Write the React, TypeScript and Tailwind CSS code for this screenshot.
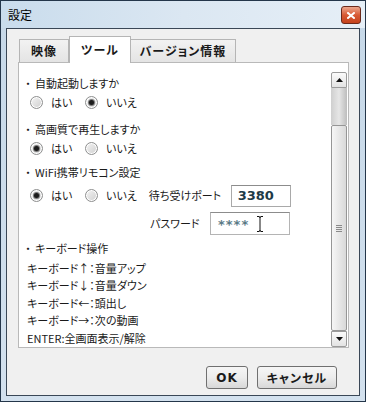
import React from "react";

const jp = { fontFamily: '"Noto Sans CJK JP", "Liberation Sans", sans-serif', fontFeatureSettings: '"palt"' };

const Radio = ({ checked }: { checked?: boolean }) => (
  <span className="flex h-[13px] w-[13px] items-center justify-center rounded-full border border-[#8e8f8f] bg-linear-to-br from-[#f4f4f4] to-[#cfcfcf] shadow-[inset_0_0_0_1px_#ffffff]">
    {checked && <span className="h-[5px] w-[5px] rounded-full bg-[#1c1c1c] ring-1 ring-[#7a7a7a]" />}
  </span>
);

const RadioPair = ({ yes }: { yes: boolean }) => (
  <div className="flex items-center">
    <div className="flex w-[55px] items-center gap-[8px]">
      <Radio checked={yes} />
      <span>はい</span>
    </div>
    <div className="flex items-center gap-[8px]">
      <Radio checked={!yes} />
      <span>いいえ</span>
    </div>
  </div>
);

const Heading = ({ children, className }: { children: React.ReactNode; className?: string }) => (
  <div className={"flex h-[16px] items-center " + (className ?? "")}>
    <span className="flex w-[12px] justify-center">・</span>
    <span className="ml-[1px]">{children}</span>
  </div>
);

const Arrow = ({ up }: { up?: boolean }) => (
  <svg width="7" height="4" viewBox="0 0 7 4">
    {up ? <polygon points="0,4 7,4 3.5,0" fill="#111" /> : <polygon points="0,0 7,0 3.5,4" fill="#111" />}
  </svg>
);

export default function App() {
  return (
    <div className="flex h-[402px] w-[366px] flex-col border border-[#24364a] bg-linear-to-b from-[#c6d8e8] to-[#d3e1ee] text-[#1a1a1a]" style={jp}>
      {/* title bar */}
      <div className="flex h-[27px] items-center justify-between bg-linear-to-r from-[#c9dcec] via-[#dbe7f2] to-[#e6eff7] pl-[7px] pr-[4px]">
        <span className="text-[12px] leading-none text-black">設定</span>
        <div className="mt-[1px] flex h-[18px] w-[20px] items-center justify-center rounded-[3px] border border-[#6b2a1c] bg-linear-to-b from-[#eba68c] via-[#d85a34] to-[#c4421c]">
          <svg width="8" height="7" viewBox="0 0 8 7">
            <path d="M1 1 L7 6 M7 1 L1 6" stroke="#fff" strokeWidth="2" strokeLinecap="square" />
          </svg>
        </div>
      </div>

      {/* client */}
      <div className="mx-[5px] flex h-[368px] flex-col border border-[#3a4756] bg-[#f0f0f0]">
        {/* tabs */}
        <div className="ml-[11px] mt-[7px] flex h-[26px] items-end pl-[1px] text-[12px] font-bold tracking-[1px]">
          <div className="flex h-[23px] w-[50px] items-center justify-center border border-b-0 border-[#b5b5b5] bg-linear-to-b from-[#f2f2f2] to-[#e4e4e4]">映像</div>
          <div className="relative z-10 -mb-px flex h-[27px] w-[62px] items-center justify-center border border-b-0 border-[#b5b5b5] bg-white pb-[1px]">ツール</div>
          <div className="flex h-[23px] w-[105px] items-center justify-center border border-b-0 border-l-0 border-[#b5b5b5] bg-linear-to-b from-[#f2f2f2] to-[#e4e4e4]">バージョン情報</div>
        </div>

        {/* panel */}
        <div className="ml-[11px] flex h-[286px] w-[331px] border border-[#b9b9b9] bg-white">
          <div className="flex flex-1 flex-col pl-[3px] pt-[13px] text-[11px] leading-none">
            <Heading>自動起動しますか</Heading>
            <div className="ml-[8px] mt-[1px] flex h-[20px] items-center">
              <RadioPair yes={false} />
            </div>
            <Heading className="mt-[9px]">高画質で再生しますか</Heading>
            <div className="ml-[8px] mt-[1px] flex h-[20px] items-center">
              <RadioPair yes={true} />
            </div>
            <Heading className="mt-[7px]">WiFi携帯リモコン設定</Heading>
            <div className="ml-[8px] mt-[4px] flex h-[22px] items-center">
              <RadioPair yes={true} />
              <span className="ml-[12px] w-[82px]">待ち受けポート</span>
              <div className="flex h-[22px] w-[60px] items-center border border-[#a9a9a9] border-t-[#8c8c8c] bg-white pl-[6px] text-[13px] font-bold text-[#1d3a48]" style={{ fontFamily: '"DejaVu Sans", sans-serif' }}>
                3380
              </div>
            </div>
            <div className="mt-[5px] flex h-[23px] items-center">
              <span className="ml-[128px] w-[60px]">パスワード</span>
              <div className="relative flex h-[23px] w-[80px] items-center border border-[#b4b4b4] border-t-[#8c8c8c] bg-white pl-[7px] pt-[3px] text-[13px] font-bold tracking-[1px] text-[#5b7a86]" style={{ fontFamily: '"DejaVu Sans", sans-serif' }}>
                ****
                <svg className="absolute left-[45px] top-[3px]" width="8" height="16" viewBox="0 0 8 16">
                  <path d="M1 0.5 H3 Q4 0.5 4 2 V14 Q4 15.5 3 15.5 H1 M7 0.5 H5 Q4 0.5 4 2 M4 14 Q4 15.5 5 15.5 H7" stroke="#111" strokeWidth="1" fill="none" />
                </svg>
              </div>
            </div>
            <Heading className="mt-[6px]">キーボード操作</Heading>
            <div className="ml-[5px] mt-[3px] flex flex-col">
              <div className="flex h-[17.5px] items-center">キーボード↑：音量アップ</div>
              <div className="flex h-[17.5px] items-center">キーボード↓：音量ダウン</div>
              <div className="flex h-[17.5px] items-center">キーボード←：頭出し</div>
              <div className="flex h-[17.5px] items-center">キーボード→：次の動画</div>
              <div className="flex h-[17.5px] items-center">ENTER:全画面表示/解除</div>
            </div>
          </div>

          {/* scrollbar */}
          <div className="mr-[1px] mt-[9px] flex h-[275px] w-[16px] flex-col">
            <div className="flex h-[16px] items-center justify-center rounded-t-[2px] border border-[#9b9b9b] bg-linear-to-b from-[#fbfbfb] to-[#e3e3e3]">
              <Arrow up />
            </div>
            <div className="h-[37px] bg-linear-to-r from-[#cfcfcf] via-[#e6e6e6] to-[#bdbdbd]" />
            <div className="flex h-[206px] items-center justify-center rounded-[2px] border border-[#969696] bg-linear-to-r from-[#f6f6f6] to-[#d9d9d9]">
              <div className="flex flex-col gap-[1px]">
                <span className="h-px w-[6px] bg-[#8a8a8a]" />
                <span className="h-px w-[6px] bg-[#8a8a8a]" />
                <span className="h-px w-[6px] bg-[#8a8a8a]" />
                <span className="h-px w-[6px] bg-[#8a8a8a]" />
              </div>
            </div>
            <div className="flex h-[16px] items-center justify-center rounded-b-[2px] border border-[#9b9b9b] bg-linear-to-b from-[#fbfbfb] to-[#e3e3e3]">
              <Arrow />
            </div>
          </div>
        </div>

        {/* buttons */}
        <div className="mr-[22px] mt-[18px] flex justify-end gap-[9px] text-[12px] font-bold tracking-[1px]">
          <button className="flex h-[23px] w-[42px] items-center justify-center rounded-[3px] border border-[#707070] bg-linear-to-b from-[#f6f6f6] via-[#ececec] to-[#d8d8d8]" style={{ fontFamily: '"DejaVu Sans", sans-serif' }}>
            OK
          </button>
          <button className="flex h-[23px] w-[80px] items-center justify-center rounded-[3px] border border-[#707070] bg-linear-to-b from-[#f6f6f6] via-[#ececec] to-[#d8d8d8]">
            キャンセル
          </button>
        </div>
      </div>
    </div>
  );
}
